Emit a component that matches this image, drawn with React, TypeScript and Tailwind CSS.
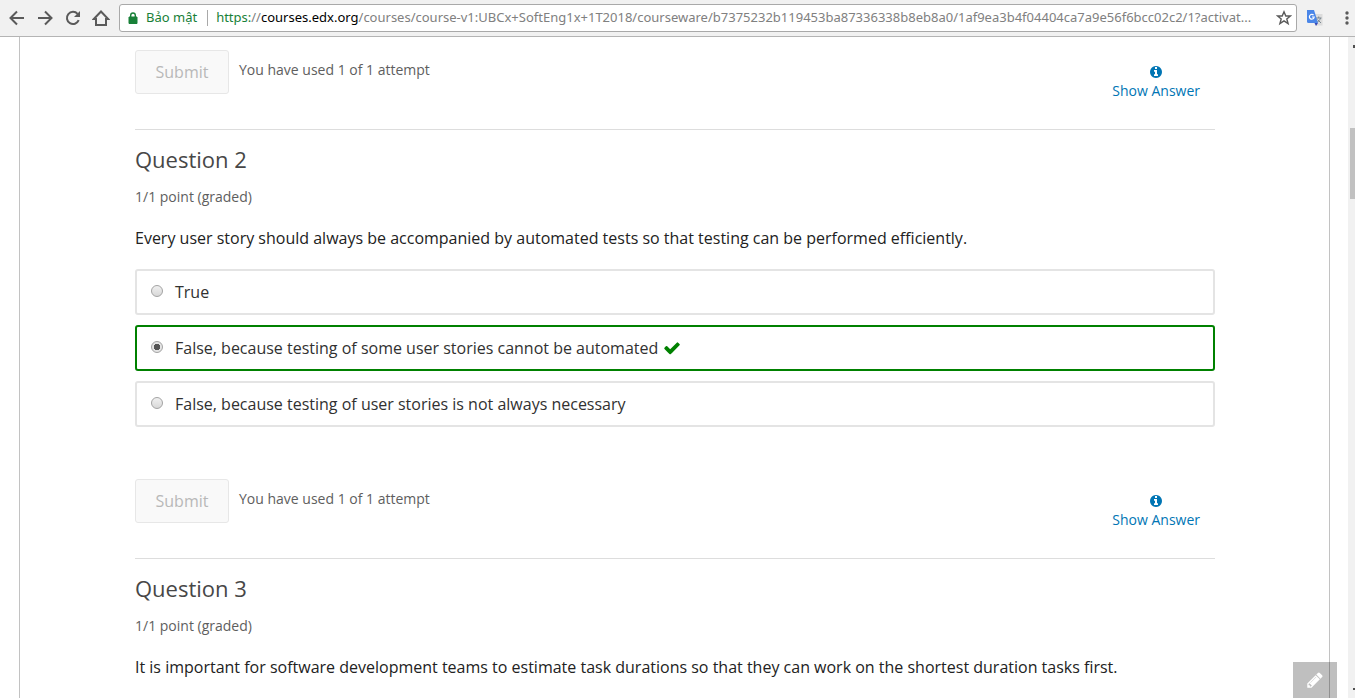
import React from 'react';

type Choice = { text: string; checked?: boolean };

const choices: Choice[] = [
  { text: 'True' },
  { text: 'False, because testing of some user stories cannot be automated', checked: true },
  { text: 'False, because testing of user stories is not always necessary' },
];

function Icon({ d, className }: { d: string; className: string }) {
  return (
    <svg viewBox="0 0 1792 1792" fill="currentColor" className={className} aria-hidden="true">
      <path d={d} />
    </svg>
  );
}

const INFO =
  'M1152 1376v-160q0-14-9-23t-23-9h-96v-512q0-14-9-23t-23-9h-320q-14 0-23 9t-9 23v160q0 14 9 23t23 9h96v320h-96q-14 0-23 9t-9 23v160q0 14 9 23t23 9h448q14 0 23-9t9-23zm-128-896v-192q0-14-9-23t-23-9h-192q-14 0-23 9t-9 23v192q0 14 9 23t23 9h192q14 0 23-9t9-23zm640 416q0 209-103 385.5t-279.5 279.5-385.5 103-385.5-103-279.5-279.5-103-385.5 103-385.5 279.5-279.5 385.5-103 385.5 103 279.5 279.5 103 385.5z';
const CHECK =
  'M1671 566q0 40-28 68l-724 724-136 136q-28 28-68 28t-68-28l-136-136-362-362q-28-28-28-68t28-68l136-136q28-28 68-28t68 28l294 295 656-657q28-28 68-28t68 28l136 136q28 28 28 68z';
const PENCIL =
  'M491 1536l91-91-235-235-91 91v107h128v128h107zm523-928q0-22-22-22-10 0-17 7l-542 542q-7 7-7 17 0 22 22 22 10 0 17-7l542-542q7-7 7-17zm-54-192l416 416-832 832h-416v-416zm683 96q0 53-37 90l-166 166-416-416 166-165q36-38 90-38 53 0 91 38l235 234q37 39 37 91z';

function Toolbar() {
  return (
    <header className="flex h-[37px] shrink-0 items-center border-b border-[#b4b4b4] bg-[#f1f1f1] pl-2 text-[#5a5a5a]">
      <nav className="flex shrink-0 gap-2.5">
        <button type="button" aria-label="Back">
          <svg viewBox="0 0 18 18" className="size-[18px]" fill="none" stroke="currentColor" strokeWidth="2">
            <path d="M16 9H3M9 2.5L2.5 9L9 15.5" />
          </svg>
        </button>
        <button type="button" aria-label="Forward">
          <svg viewBox="0 0 18 18" className="size-[18px]" fill="none" stroke="currentColor" strokeWidth="2">
            <path d="M2 9H15M9 2.5L15.5 9L9 15.5" />
          </svg>
        </button>
        <button type="button" aria-label="Reload">
          <svg viewBox="0 0 18 18" className="size-[18px]" fill="none" stroke="currentColor" strokeWidth="2">
            <path d="M14.7 11.2A6.1 6.1 0 1 1 13.6 4.9" />
            <path d="M16 2V8H10Z" fill="currentColor" stroke="none" />
          </svg>
        </button>
        <button type="button" aria-label="Home">
          <svg viewBox="0 0 18 18" className="size-[18px]" fill="none" stroke="currentColor" strokeWidth="2">
            <path d="M1.8 10L9 2.5L16.2 10H14V16H4V10Z" />
          </svg>
        </button>
      </nav>
      <div className="ml-[9px] flex h-7 min-w-0 flex-1 items-center rounded-[3px] border border-[#a9a9a9] bg-white px-2">
        <svg viewBox="0 0 10 12" className="h-3 w-2.5 shrink-0 text-[#188038]" aria-hidden="true">
          <path d="M1 5H9V11.5H1Z" fill="currentColor" stroke="currentColor" />
          <path d="M2.7 5.5V3.3a2.3 2.3 0 0 1 4.6 0V5.5" fill="none" stroke="currentColor" strokeWidth="1.4" />
        </svg>
        <span className="ml-2 shrink-0 font-['Noto_Sans',sans-serif] text-[13px] text-[#188038]">Bảo mật</span>
        <span className="mr-2 ml-2.5 h-4 w-px shrink-0 bg-[#a9a9a9]" />
        <div
          role="textbox"
          aria-label="Address"
          className="min-w-0 flex-1 overflow-hidden font-['Noto_Sans',sans-serif] text-[13px] whitespace-nowrap text-[#808080]"
        >
          <span className="text-[#188038]">https:</span>//<span className="text-black">courses.edx.org</span>
          /courses/course-v1:UBCx+SoftEng1x+1T2018/courseware/b7375232b119453ba87336338b8eb8a0/1af9ea3b4f04404ca7a9e56f6bcc02c2/1?activat...
        </div>
        <button type="button" aria-label="Bookmark this page" className="-mr-1 shrink-0">
          <svg viewBox="0 0 16 16" className="size-4" fill="none" stroke="currentColor" strokeWidth="1.4">
            <path d="M8 1.8L9.8 6H14.4L10.8 8.9L12.1 13.6L8 10.9L3.9 13.6L5.2 8.9L1.6 6H6.2Z" />
          </svg>
        </button>
      </div>
      <button type="button" aria-label="Translate" className="ml-2.5 shrink-0">
        <svg viewBox="0 0 16 16" className="size-4">
          <path d="M6 4H15.500V15.500H9Z" fill="#dcdcdc" />
          <path d="M9 8H14.500M11.700 6.500V8M13.500 8C13 10 11.500 11.500 9.500 12.500M10.500 9.500L14 13" stroke="#7a8790" fill="none" />
          <path d="M0 0H7L11 13H1.500Q0 13 0 11.500Z" fill="#4a86e8" />
          <path d="M7.500 13H11L9 16Z" fill="#3748b5" />
          <path d="M6.600 5.200A2.400 2.400 0 1 0 7.200 7H5" stroke="#fff" strokeWidth="1.200" fill="none" />
        </svg>
      </button>
      <button type="button" aria-label="Menu" className="ml-4 shrink-0">
        <svg viewBox="0 0 16 16" className="size-4" fill="currentColor">
          <circle cx="8" cy="3" r="1.7" />
          <circle cx="8" cy="8" r="1.7" />
          <circle cx="8" cy="13" r="1.7" />
        </svg>
      </button>
    </header>
  );
}

function SubmitRow() {
  return (
    <div className="flex items-start">
      <button
        type="button"
        disabled
        className="h-11 w-[94px] shrink-0 rounded-[3px] border border-[#e7e7e7] bg-[#f9f9f9] text-[16px] text-[#b8b8b8]"
      >
        Submit
      </button>
      <p className="ml-2.5 pt-2.5 text-[14px] leading-5 text-[#5e5e5e]">You have used 1 of 1 attempt</p>
      <button
        type="button"
        className="mt-[15px] mr-[15px] ml-auto flex flex-col items-center gap-0.5 text-[14px] leading-5 text-[#0075b4]"
      >
        <Icon d={INFO} className="size-3.5" />
        Show Answer
      </button>
    </div>
  );
}

function Question({ n, prompt, options }: { n: number; prompt: string; options?: Choice[] }) {
  return (
    <section className="mt-7 border-t border-[#ddd] pt-[15px]">
      <h3 className="text-[22px] leading-7 text-[#474747]">Question {n}</h3>
      <p className="mt-3.5 text-[14px] leading-5 text-[#5e5e5e]">1/1 point (graded)</p>
      <fieldset className="mt-[19px]">
        <legend className="text-[16px] leading-6 text-[#222]">{prompt}</legend>
        {options && (
          <div className="mt-[19px] mb-[52px] flex flex-col gap-2.5">
            {options.map((o) => (
              <label
                key={o.text}
                className={
                  'flex h-[46px] items-center rounded-[3px] border-2 pl-3.5 text-[16px] text-[#313131] ' +
                  (o.checked ? 'border-[#008100]' : 'border-[#e4e4e4]')
                }
              >
                <input
                  type="radio"
                  name={`question-${n}`}
                  defaultChecked={o.checked}
                  className="mr-3 mb-0.5 size-3 appearance-none rounded-full border border-[#a3a3a3] bg-linear-to-b from-[#f0f0f0] to-[#d8d8d8] checked:bg-[radial-gradient(circle,#555_0,#555_3px,#e4e4e4_3px)]"
                />
                {o.text}
                {o.checked && <Icon d={CHECK} className="ml-[5px] size-[18px] text-[#008100]" />}
              </label>
            ))}
          </div>
        )}
      </fieldset>
      {options && <SubmitRow />}
    </section>
  );
}

export default function App() {
  return (
    <div className="flex h-screen flex-col overflow-hidden bg-white font-['Open_Sans',sans-serif]">
      <Toolbar />
      <div className="flex min-h-0 flex-1">
        <main className="mr-[18px] ml-[19px] min-w-0 flex-1 overflow-hidden border-x border-[#c2c2c2] pt-[13px] pr-[114px] pl-[115px]">
          <SubmitRow />
          <Question
            n={2}
            prompt="Every user story should always be accompanied by automated tests so that testing can be performed efficiently."
            options={choices}
          />
          <Question
            n={3}
            prompt="It is important for software development teams to estimate task durations so that they can work on the shortest duration tasks first."
          />
        </main>
        <div className="flex w-[7px] shrink-0 flex-col items-end bg-[#f1f1f1]" aria-hidden="true">
          <span className="mt-2 mb-20 h-[3px] w-0.5 bg-[#505050]" />
          <span className="h-[71px] w-[5px] bg-[#c1c1c1]" />
          <span className="mt-auto mb-2 h-0.5 w-0.5 bg-[#505050]" />
        </div>
      </div>
      <button
        type="button"
        aria-label="Show notes"
        className="fixed right-[18px] bottom-0 flex h-9 w-11 items-center justify-center bg-black/25 text-white"
      >
        <Icon d={PENCIL} className="size-[18px]" />
      </button>
    </div>
  );
}
